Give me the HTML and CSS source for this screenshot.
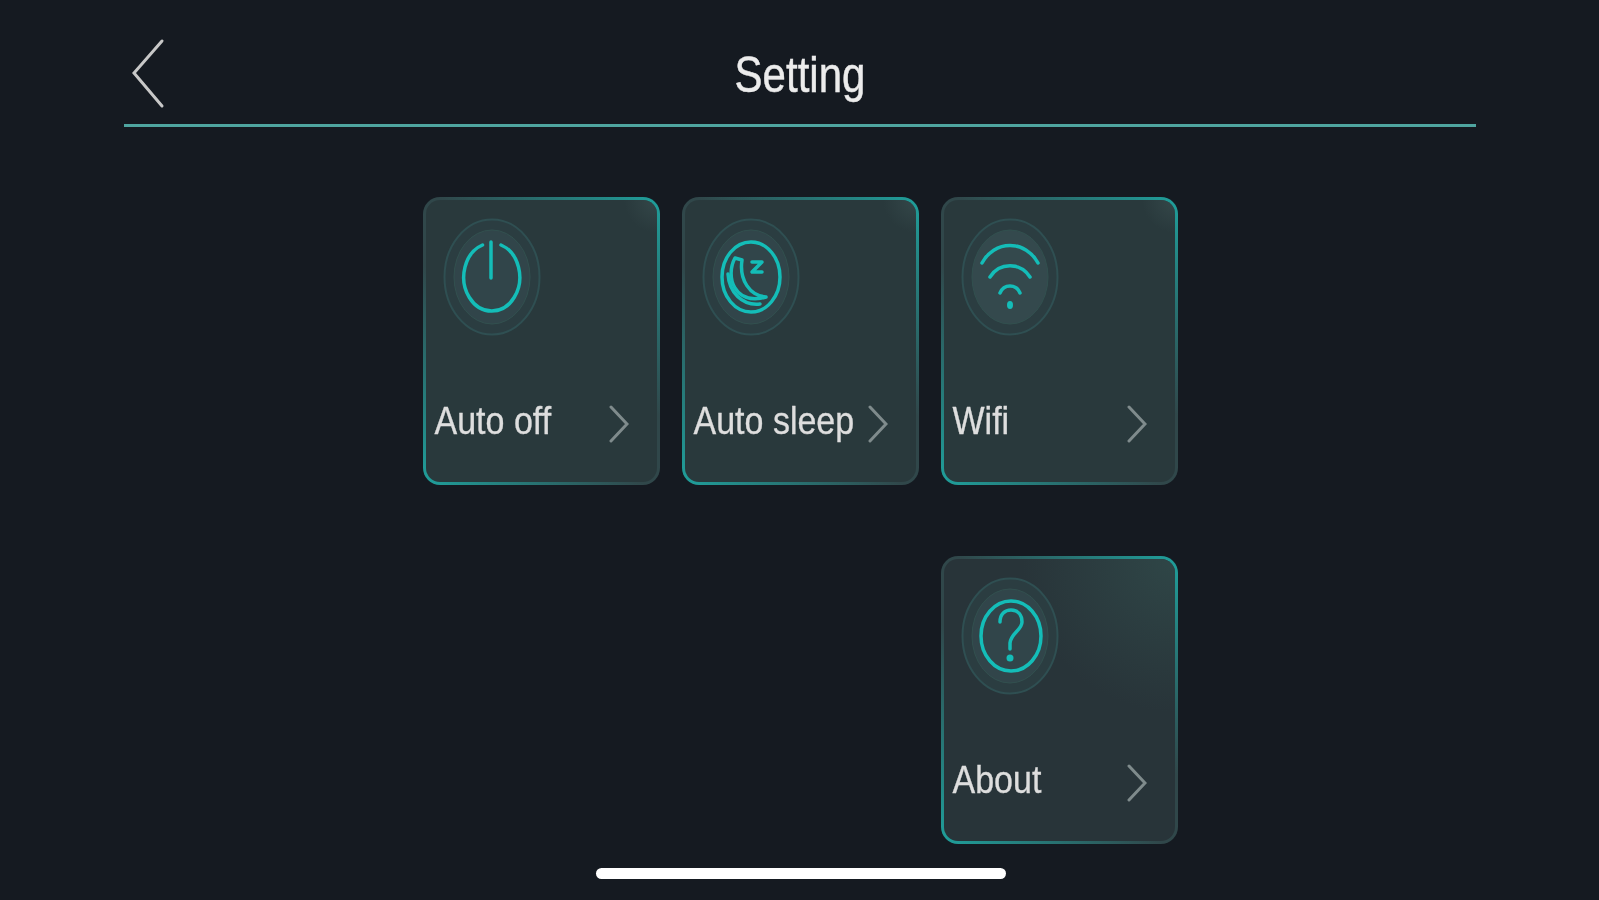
FILE: index.html
```html
<!DOCTYPE html>
<html lang="en">

<head>
  <meta charset="UTF-8" />
  <meta name="viewport" content="width=device-width, initial-scale=1.0" />
  <title>Setting</title>
  <link rel="stylesheet" href="styles.css">
</head>

<body>
  <div class="page">
    <header class="top">
      <svg class="back" viewBox="0 0 34 72">
        <path d="M31 3 L3 35 L31 68" />
      </svg>
      <h1 class="title">Setting</h1>
    </header>

    <div class="grid">
      <div class="card">
        <svg class="icon" viewBox="0 0 98 118">
          <ellipse class="halo" cx="49" cy="59" rx="47.5" ry="57.5" />
          <ellipse class="disc" cx="49" cy="59" rx="38" ry="47" />
          <path class="glyph" d="M39.5 27 A28 34 0 1 0 58 27" />
          <path class="glyph" d="M48 24 V60" />
        </svg>
        <div class="row">
          <span class="label">Auto off</span>
          <svg class="more" viewBox="0 0 20 38"><path d="M2 2 L18 19 L2 36" /></svg>
        </div>
      </div>

      <div class="card">
        <svg class="icon" viewBox="0 0 98 118">
          <ellipse class="halo" cx="49" cy="59" rx="47.5" ry="57.5" />
          <ellipse class="disc" cx="49" cy="59" rx="38" ry="47" />
          <ellipse class="glyph" cx="49" cy="59" rx="29" ry="35" />
          <path class="glyph" d="M33 40 C23 58 32 88 64 79 C48 78 37 62 40 42 Z" />
          <path class="glyph" d="M26 56 C27 74 40 88 58 86" />
          <path class="glyph" d="M50 44 H60 L50 54 H60" />
        </svg>
        <div class="row">
          <span class="label">Auto sleep</span>
          <svg class="more" viewBox="0 0 20 38"><path d="M2 2 L18 19 L2 36" /></svg>
        </div>
      </div>

      <div class="card">
        <svg class="icon" viewBox="0 0 98 118">
          <ellipse class="halo" cx="49" cy="59" rx="47.5" ry="57.5" />
          <ellipse class="disc light" cx="49" cy="59" rx="38" ry="47" />
          <path class="glyph" d="M21 45 A32 34 0 0 1 77 45" />
          <path class="glyph" d="M29 59 A24 25 0 0 1 69 59" />
          <path class="glyph" d="M39 75 A11 12 0 0 1 59 75" />
          <ellipse class="dot" cx="49" cy="87" rx="3" ry="4" />
        </svg>
        <div class="row">
          <span class="label">Wifi</span>
          <svg class="more" viewBox="0 0 20 38"><path d="M2 2 L18 19 L2 36" /></svg>
        </div>
      </div>

      <div class="card about">
        <svg class="icon" viewBox="0 0 98 118">
          <ellipse class="halo" cx="49" cy="59" rx="47.5" ry="57.5" />
          <ellipse class="disc" cx="49" cy="59" rx="38" ry="47" />
          <ellipse class="glyph" cx="50" cy="59" rx="30" ry="35" />
          <path class="glyph" d="M39 45 C39 37 44 33 50 33 C57 33 61 38 61 45 C61 53 50 56 49 66 V72" />
          <ellipse class="dot" cx="49" cy="81" rx="3.5" ry="3.5" />
        </svg>
        <div class="row">
          <span class="label">About</span>
          <svg class="more" viewBox="0 0 20 38"><path d="M2 2 L18 19 L2 36" /></svg>
        </div>
      </div>
    </div>

    <div class="home-bar"></div>
  </div>
</body>

</html>
```

FILE: styles.css
```css
:root {
  --bg: #151a21;
  --card: #29393c;
  --teal: #14bdb8;
  --edge: #1fa09c;
}

html,
body {
  margin: 0;
  padding: 0;
  background-color: var(--bg);
}

.page {
  width: 1599px;
  height: 900px;
  overflow: hidden;
  font-family: "Liberation Sans", Arial, sans-serif;
  filter: blur(0.7px);
}

.top {
  position: relative;
  margin: 0 123px 0 124px;
  height: 124px;
  border-bottom: 3px solid #4fa5a0;
  display: flex;
  align-items: center;
  justify-content: center;
}

.back {
  position: absolute;
  left: 7px;
  top: 38px;
  width: 34px;
  height: 72px;
  fill: none;
  stroke: #c8c8c8;
  stroke-width: 3;
  stroke-linecap: round;
}

/* the source picture is stretched upwards, so the text is too */
.title {
  margin: 26px 0 0;
  font-size: 42px;
  font-weight: 400;
  color: #ececec;
  -webkit-text-stroke: 0.4px #ececec;
  transform: scaleY(1.18);
}

.grid {
  display: grid;
  grid-template-columns: repeat(3, 237px);
  grid-auto-rows: 288px;
  gap: 71px 22px;
  justify-content: center;
  margin: 70px 0 0 1px;
}

.card {
  box-sizing: border-box;
  padding: 18px 28px 0 9px;
  border: 3px solid transparent;
  border-radius: 17px;
  background:
    radial-gradient(circle at 100% 0, #344749 0, rgba(52, 71, 73, 0) 9%) padding-box,
    linear-gradient(var(--card), var(--card)) padding-box,
    linear-gradient(45deg, var(--edge) 0, #30474a 42%, #30474a 58%, var(--edge) 100%) border-box;
}

.about {
  grid-column: 3;
  background:
    radial-gradient(circle at 100% 0, #2f4647 0, rgba(47, 70, 71, 0) 42%) padding-box,
    linear-gradient(#283439, #283439) padding-box,
    linear-gradient(45deg, var(--edge) 0, #30474a 42%, #30474a 58%, var(--edge) 100%) border-box;
}

.icon {
  display: block;
  width: 98px;
  height: 118px;
  margin-left: 8px;
}

.halo {
  fill: #2b3d41;
  stroke: #2f4f52;
  stroke-width: 2;
}

.disc {
  fill: #31454a;
  stroke: #32504f;
}

.disc.light {
  fill: #34494d;
}

.glyph {
  fill: none;
  stroke: var(--teal);
  stroke-width: 3.5;
  stroke-linecap: round;
  stroke-linejoin: round;
}

.dot {
  fill: var(--teal);
}

.row {
  display: flex;
  align-items: center;
  justify-content: space-between;
  height: 40px;
  margin-top: 65px;
}

.label {
  display: inline-block;
  font-size: 34px;
  color: #dedede;
  -webkit-text-stroke: 0.3px #dedede;
  transform: scaleY(1.12);
}

.more {
  flex: none;
  width: 20px;
  height: 38px;
  margin-top: 6px;
  fill: none;
  stroke: #7f8b8c;
  stroke-width: 3;
  stroke-linecap: round;
}

.home-bar {
  width: 410px;
  height: 11px;
  margin: 24px 0 0 596px;
  border-radius: 6px;
  background-color: #ffffff;
}
```
